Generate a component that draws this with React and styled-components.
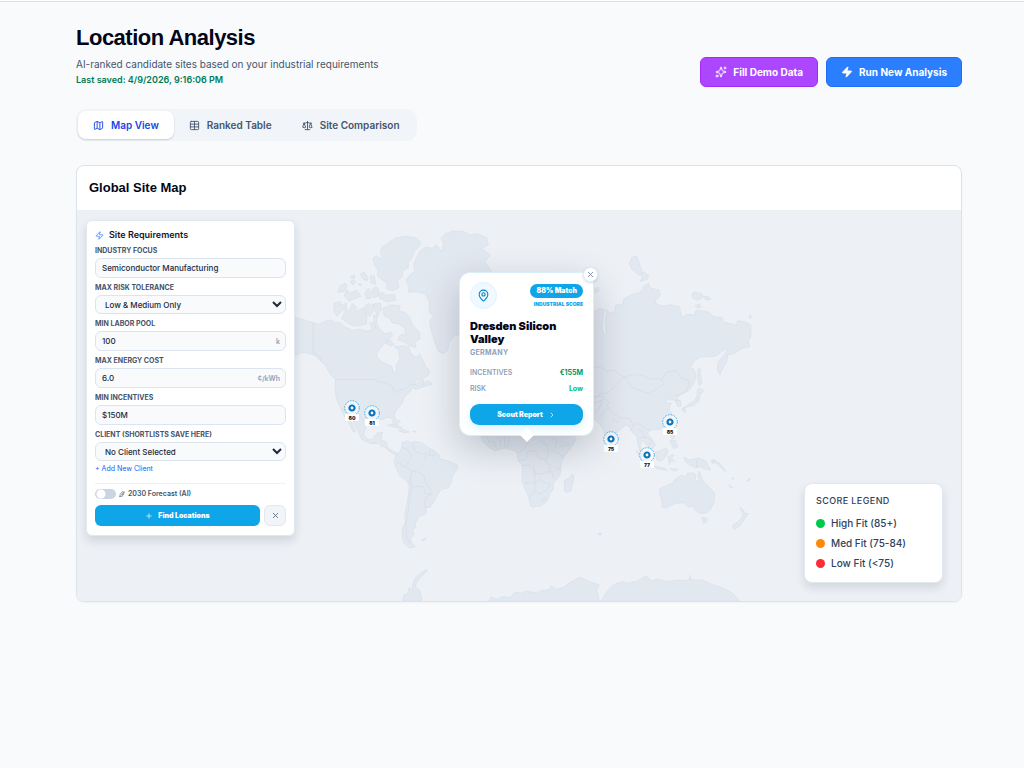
import React from "react";
import styled, { createGlobalStyle, css } from "styled-components";
import { Map, Table, Scale, Sparkles, Zap, MapPin, ChevronRight, Plus, X } from "lucide-react";

const Global = createGlobalStyle`
  *, *::before, *::after { box-sizing: border-box; }
  body { margin: 0; background: #f8fafc; color: #0f172b; font-family: Inter, "Liberation Sans", sans-serif; }
  button, input, select { font-family: inherit; }
  h1, h2, h3, p, dl, dd, ul { margin: 0; padding: 0; }
`;

const Page = styled.div`
  min-height: 100vh;
  border-top: 1px solid #fff;
  box-shadow: inset 0 1px 0 #dde2ea;
  padding: 24px 62px 24px 76px;
`;
const Header = styled.header`
  display: flex;
  justify-content: space-between;
  align-items: flex-end;
`;
const Title = styled.h1`
  font: 700 22px/26px "Liberation Sans", Arial, sans-serif;
  letter-spacing: -0.5px;
  color: #020618;
`;
const Subtitle = styled.p`
  margin-top: 5px;
  font-size: 10px;
  line-height: 16px;
  color: #45556c;
`;
const Saved = styled.p`
  font-size: 9px;
  line-height: 15px;
  font-weight: 600;
  color: #007a55;
`;
const Actions = styled.div`
  display: flex;
  gap: 8px;
`;
const ActionButton = styled.button`
  display: flex;
  align-items: center;
  gap: 6px;
  height: 30px;
  padding: 0 14px;
  border: 1px solid ${(p) => p.$edge};
  border-radius: 6px;
  background: ${(p) => p.$fill};
  color: #fff;
  font-size: 10px;
  font-weight: 700;
`;
const Tabs = styled.nav`
  display: inline-flex;
  margin-top: 22px;
  padding: 2px;
  border-radius: 10px;
  background: #f1f5f9;
`;
const Tab = styled.button`
  display: flex;
  align-items: center;
  gap: 7px;
  height: 28px;
  padding: 0 15px;
  border: 0;
  border-radius: 8px;
  background: transparent;
  color: #45556c;
  font-size: 10px;
  font-weight: 600;
  ${(p) => p.$active && css`
    background: #fff;
    color: #1447e6;
    box-shadow: 0 1px 2px rgba(15, 23, 42, 0.18);
  `}
`;
const Card = styled.section`
  margin-top: 24px;
  border: 1px solid #dbe3ec;
  border-radius: 8px;
  background: #fff;
  overflow: hidden;
  box-shadow: 0 1px 2px rgba(15, 23, 42, 0.04);
`;
const CardTitle = styled.h2`
  padding: 12px;
  font: 700 13px/20px "Liberation Sans", Arial, sans-serif;
  color: #020618;
`;
const MapArea = styled.div`
  position: relative;
  display: flex;
  justify-content: space-between;
  align-items: flex-start;
  min-height: 391px;
  padding: 10px 18px 18px 9px;
  background: #edf1f6;
`;
const WorldSvg = styled.svg`
  position: absolute;
  inset: 0;
  width: 100%;
  height: 100%;
`;
const Form = styled.form`
  position: relative;
  width: 209px;
  padding: 8px 8px 9px;
  border: 1px solid #e2e8f0;
  border-radius: 6px;
  background: #fff;
  box-shadow: 0 5px 10px rgba(15, 23, 42, 0.13);
`;
const FormTitle = styled.h3`
  display: flex;
  align-items: center;
  gap: 5px;
  font-size: 9px;
  line-height: 12px;
  font-weight: 600;
`;
const Field = styled.div`
  margin-top: 5px;
  display: grid;
  gap: 2px;
`;
const Label = styled.label`
  font-size: 7px;
  line-height: 10px;
  font-weight: 700;
  text-transform: uppercase;
  color: #45556c;
`;
const control = css`
  width: 100%;
  border: 1px solid #dbe4ef;
  border-radius: 6px;
  background: #f8fafc;
  color: #1d293d;
  font-size: 8px;
  font-weight: 500;
`;
const InputWrap = styled.div`
  display: grid;
  align-items: center;
  > * { grid-area: 1 / 1; }
`;
const Input = styled.input`
  ${control}
  height: 20px;
  padding: 0 6px;
`;
const Select = styled.select`
  ${control}
  height: 19px;
  padding: 0 5px;
`;
const Unit = styled.span`
  justify-self: end;
  margin-right: 6px;
  font-size: 7px;
  font-weight: 600;
  color: #90a1b9;
`;
const AddLink = styled.a`
  display: block;
  margin-top: 2px;
  font-size: 7px;
  line-height: 12px;
  color: #155dfc;
  text-decoration: none;
`;
const Forecast = styled.label`
  display: flex;
  align-items: center;
  gap: 3px;
  margin-top: 8px;
  padding-top: 4px;
  border-top: 1px solid #eef2f7;
  font-size: 7px;
  line-height: 12px;
  font-weight: 600;
  color: #45556c;
`;
const Toggle = styled.input`
  appearance: none;
  width: 21px;
  height: 10px;
  margin: 0;
  border-radius: 5px;
  background: radial-gradient(circle at 6px 5px, #fff 4px, transparent 5px) #cad5e2;
`;
const FormButtons = styled.div`
  display: flex;
  gap: 4px;
  margin-top: 5px;
`;
const FindButton = styled.button`
  flex: 1;
  display: flex;
  align-items: center;
  justify-content: center;
  gap: 5px;
  height: 21px;
  border: 0;
  border-radius: 6px;
  background: #0ea5e9;
  color: #fff;
  font-size: 7px;
  font-weight: 900;
`;
const ClearButton = styled.button`
  display: grid;
  place-items: center;
  width: 22px;
  height: 21px;
  padding: 0;
  border: 1px solid #e2e8f0;
  border-radius: 6px;
  background: #f1f5f9;
  color: #45556c;
`;
const Legend = styled.aside`
  position: relative;
  align-self: flex-end;
  width: 139px;
  padding: 10px 11px 9px;
  border: 1px solid #e2e8f0;
  border-radius: 8px;
  background: #fff;
  box-shadow: 0 5px 10px rgba(15, 23, 42, 0.12);
`;
const LegendTitle = styled.h3`
  font-size: 9px;
  line-height: 13px;
  font-weight: 500;
  letter-spacing: 0.4px;
  color: #314158;
  margin-bottom: 6px;
`;
const LegendItem = styled.li`
  display: flex;
  align-items: center;
  gap: 6px;
  font-size: 10px;
  font-weight: 500;
  line-height: 20px;
  color: #314158;
  list-style: none;
  &::before {
    content: "";
    width: 9px;
    height: 9px;
    border-radius: 50%;
    background: ${(p) => p.$color};
  }
`;
const Popup = styled.article`
  position: absolute;
  top: 62px;
  left: calc(50% - 60px);
  width: 135px;
  padding: 9px 10px 10px;
  border: 1px solid #d9eefb;
  border-radius: 11px;
  background: #fff;
  box-shadow: 0 12px 36px rgba(15, 23, 42, 0.22);
  &::after {
    content: "";
    position: absolute;
    bottom: -5px;
    left: 50%;
    width: 10px;
    height: 10px;
    background: #fff;
    transform: translateX(-50%) rotate(45deg);
  }
`;
const CloseButton = styled.button`
  position: absolute;
  top: -6px;
  right: -5px;
  display: grid;
  place-items: center;
  width: 15px;
  height: 15px;
  padding: 0;
  border: 1px solid #d9eefb;
  border-radius: 50%;
  background: #fff;
  color: #62748e;
  box-shadow: 0 1px 3px rgba(15, 23, 42, 0.15);
`;
const PopupTop = styled.div`
  display: flex;
  justify-content: space-between;
  align-items: flex-start;
`;
const PinBadge = styled.span`
  display: grid;
  place-items: center;
  width: 27px;
  height: 27px;
  border: 1px solid #e0f2fe;
  border-radius: 50%;
  background: #f0f9ff;
  color: #0284c7;
`;
const Score = styled.div`
  display: grid;
  justify-items: end;
  gap: 2px;
  padding-top: 2px;
`;
const Match = styled.strong`
  padding: 0 6px;
  border-radius: 7px;
  background: #0ea5e9;
  color: #fff;
  font-size: 7px;
  line-height: 14px;
  font-weight: 900;
`;
const ScoreKind = styled.span`
  font-size: 5px;
  line-height: 8px;
  font-weight: 900;
  color: #0ea5e9;
`;
const PopupTitle = styled.h3`
  margin-top: 11px;
  font-size: 11px;
  line-height: 13px;
  font-weight: 900;
  color: #020618;
`;
const Country = styled.p`
  font-size: 7px;
  line-height: 13px;
  font-weight: 700;
  letter-spacing: 0.3px;
  color: #90a1b9;
`;
const Facts = styled.dl`
  margin-top: 6px;
`;
const Fact = styled.div`
  display: flex;
  justify-content: space-between;
  font-size: 7px;
  line-height: 16px;
  font-weight: 600;
  color: #90a1b9;
  dd { color: ${(p) => p.$color}; font-weight: 700; }
`;
const ReportButton = styled.button`
  display: flex;
  align-items: center;
  justify-content: center;
  gap: 5px;
  width: 100%;
  height: 21px;
  margin-top: 7px;
  border: 0;
  border-radius: 9px;
  background: #0ea5e9;
  color: #fff;
  font-size: 7px;
  font-weight: 900;
  box-shadow: 0 4px 8px rgba(14, 165, 233, 0.14);
`;

const regions = [
  {
    at: [295, 225],
    land: [
      // Alaska, Canada, United States, Mexico and Central America
      "M-30 290L0 278 20 282 54 293 72 298 86 290 108 285 122 294 132 290 150 306 172 316 192 312 212 318 232 314 240 308 238 290 236 270 246 272 246 300 260 320 270 326 290 322 292 334 280 345 262 362 246 385 247 398 264 412 290 424 296 444 304 444 304 420 315 402 312 384 310 366 324 362 340 366 350 388 366 398 374 386 384 408 392 425 404 436 400 452 382 460 366 466 350 478 364 476 382 462 388 470 382 480 400 466 413 478 400 480 384 486 362 494 354 486 344 502 328 515 320 538 304 554 298 572 308 590 306 604 298 602 290 580 276 576 262 584 242 578 222 590 212 606 206 630 220 645 234 642 246 624 262 622 258 646 274 650 278 670 300 682 318 690 306 690 290 684 270 668 250 656 226 656 200 642 190 620 174 590 164 580 182 620 176 622 162 595 150 578 138 552 124 522 120 490 122 464 106 448 92 422 78 408 60 392 40 384 20 382 0 392 -30 400Z",
      "M238 120L234 100 246 92 252 102 262 96 256 80 262 66 280 54 300 40 330 34 362 38 378 52 370 66 356 82 350 100 340 112 340 128 324 136 322 154 308 168 312 188 292 198 274 190 278 176 258 162 246 150 250 136Z",
      "M376 78L392 66 412 70 426 60 440 80 446 54 438 42 450 26 476 18 506 20 526 30 548 26 575 38 580 60 560 70 585 90 570 110 590 140 560 190 545 240 530 290 500 322 478 334 462 352 458 376 444 386 430 378 420 352 410 320 404 290 414 274 402 260 404 234 392 208 366 200 340 202 342 186 332 164 346 150 360 138 356 118 366 96Z",
      "M118 234L136 230 138 242 154 234 154 254 142 256 126 274 116 258Z",
      "M140 280L150 258 166 254 172 236 184 246 182 260 206 248 216 276 214 296 196 302 172 302 156 292Z",
      "M210 242L222 236 228 244 236 236 236 258 224 274 214 266Z",
      "M238 236L256 234 260 252 248 274 240 256Z",
      "M264 250L286 240 316 242 312 258 330 262 344 278 352 300 374 322 376 342 360 350 364 368 342 362 326 350 308 344 316 330 332 326 330 310 308 296 292 294 282 278 268 274Z",
      "M250 206L262 202 272 210 300 208 302 226 278 230 256 222Z",
      "M232 194L242 184 252 196 248 214 236 218Z",
      "M210 204L220 190 230 202 228 220 214 220Z",
      "M148 212L154 194 166 204 186 196 198 214 184 220 162 228Z",
      "M128 202L136 182 152 174 156 184 146 200Z",
      "M196 146L208 142 220 158 216 168 202 160Z",
      "M226 152L238 154 242 178 228 174Z",
      "M168 152l12 0-2 8-9 0ZM166 170l10-6 6 6-8 10ZM190 176l10 2-4 6Z",
      "M224 294l14-2 4 16-12 2ZM276 344l12 4 10 10-10 6-14-8ZM298 364l14 2-8 6Z",
    ],
    borders: [
      "M54 293L54 382 70 390 80 408",
      "M122 464L240 464 246 468 272 474 292 484 298 504 316 494 334 490 346 480 362 476 368 486",
      "M138 552L160 560 188 564 206 586",
      "M232 656L246 650M254 668L264 660",
    ],
  },
  {
    at: [380, 400],
    land: [
      "M66 128L84 122 92 130 104 124 126 128 140 140 164 152 178 164 180 176 208 184 232 194 234 204 218 226 214 246 204 264 184 268 172 284 164 302 150 322 136 322 140 336 132 344 114 350 112 362 104 368 108 382 98 390 102 404 92 414 94 428 106 440 90 444 74 432 66 412 68 384 76 368 74 344 80 318 84 290 88 258 78 240 60 228 50 208 42 188 46 168 58 158 66 142Z",
      "M126 418L138 415 134 420 128 422Z",
      "M22 76L38 72 58 78 70 88 52 84 36 80Z",
      "M56 92L74 90 88 96 72 98ZM98 94l10 0-2 3Z",
      "M54 58l5 4-2 8M60 68l3 2",
      "M300 70L590 70 582 96 586 122 572 146 552 170 544 190 542 208 540 226 520 250 520 268 510 280 502 302 486 316 458 322 450 316 448 296 436 268 426 244 428 214 426 194 414 182 412 160 404 152 376 144 344 152 324 140 308 124 302 106Z",
      "M578 222L582 232 574 270 562 278 552 272 554 240 568 234Z",
      "M68 603L72 585 82 582 88 562 96 574 98 556 106 534 124 518 140 508 142 512 124 530 110 546 106 560 120 572 126 603Z",
      "M326 603L334 590 350 598 366 590 390 592 406 576 424 580 440 574 470 578 484 572 506 570 514 558 530 568 550 562 566 550 584 540 600 532 632 546 658 555 650 570 658 603Z",
      "M664 603L680 575 705 552 732 544 738 550 770 544 798 528 815 542 834 538 860 545 892 540 926 542 930 526 936 540 968 540 994 552 1010 558 1034 566 1058 580 1078 603Z",
    ],
    borders: [
      "M66 142L82 148 96 168 86 186 76 200 96 212 92 232 88 250",
      "M98 130L104 152 120 162 138 160 136 178M150 148L146 166 164 168M160 152L166 168",
      "M96 212L114 216 132 228 138 250 150 266 154 284 138 290 132 300 136 322",
      "M92 232L96 262 88 300 84 340 78 372 80 412 90 430",
      "M50 188L62 190 66 200 76 200M96 262L114 258 132 262 134 280 154 284",
      "M304 108L322 112 328 128 344 124 350 150M350 110L360 118 362 140M372 100L376 144M388 98L384 142",
      "M412 160L430 150 448 120 444 98M414 182L438 180 442 156 468 152 476 176 500 178 506 158 498 132 476 120",
      "M426 196L446 196 462 206 466 220 488 222 508 212 510 196 498 188 500 178M462 206L466 248 446 250 436 248",
      "M466 248L462 268 478 282 500 270 510 254 492 246 482 238 466 248M448 296L458 278 466 276M484 298l10-8 4 6-10 8Z",
      "M510 150L530 158 552 170M524 150L530 120 512 112M500 220L516 214 522 236M540 140L570 134M530 206L542 208",
    ],
  },
  {
    at: [580, 240],
    land: [
      "M20 230L56 206 72 208 68 240 66 262 72 286 80 280 76 246 80 220 78 208 88 218 106 215 106 196 130 192 130 178 150 166 176 158 190 150 190 140 206 130 210 144 236 150 242 164 228 180 226 190 248 198 270 194 298 200 304 226 314 232 318 222 344 226 348 210 386 216 402 230 426 232 430 246 470 256 472 242 498 246 513 256 513 290 504 302 510 320 484 326 464 340 444 344 440 366 428 384 420 404 412 390 414 366 430 348 446 322 426 334 412 346 396 350 362 350 344 362 330 382 342 388 348 406 342 430 326 452 302 464 290 474 302 484 304 498 294 500 284 480 270 480 262 474 258 488 274 490 266 506 276 522 274 544 260 558 240 568 210 570 202 582 218 600 226 616 214 630 200 614 188 602 180 616 190 642 204 670 212 684 198 674 184 652 176 620 170 588 160 580 146 558 136 556 112 576 104 604 92 620 80 596 68 564 54 546 30 530Z",
      "M148 72L156 52 170 48 178 70 186 94 182 108 168 98 156 88Z",
      "M186 98L194 96 206 108 202 118 180 124 188 110Z",
      "M336 160L346 156 366 162 368 174 352 180 338 174Z",
      "M370 168L386 170 392 178 378 180ZM346 198l10-6 8 8-10 5ZM506 232l7-7v10ZM44 146l10-4 3 10-12 8Z",
      "M354 390L360 384 362 410 366 428 358 438 352 412Z",
      "M352 450L360 444 372 452 360 464 356 484 342 496 324 500 308 506 330 490 344 482 352 466Z",
      "M306 506l10 0 0 12-8-4Z",
      "M272 586L280 578 284 592 278 598ZM270 600L286 602 294 620 282 626 274 614Z",
      "M226 636L240 632 258 624 264 634 256 652 244 664 230 660Z",
      "M264 650L282 644 274 656 284 664 272 662 268 674Z",
      "M220 678L250 684 262 690 236 688Z",
      "M168 630L180 644 200 664 208 680 192 670 178 650Z",
      "M312 652L328 660 356 654 378 664 392 690 376 688 360 680 346 684 330 676 316 664Z",
      "M392 664L408 660 400 672ZM394 658l26 12 18 24-8-4-14-14Z",
      "M270 686l24 2-10 6ZM456 712l6 4-4 3ZM446 734l12 8-4 2ZM500 722l12-8-6 10ZM54 880l8-1 2 5-7 2Z",
      "M240 746L262 736 276 730 290 714 304 706 318 710 322 700 340 698 348 706 346 720 360 726 354 706 358 694 368 720 384 738 404 760 402 788 390 810 376 820 360 820 350 814 336 798 326 802 310 788 286 790 258 804 246 800 246 784 238 760Z",
      "M366 832L382 836 378 848 370 850Z",
      "M480 802L492 812 494 820 506 820 494 836 480 858 462 868 456 858 476 844 490 826Z",
    ],
    borders: [
      "M40 384L62 380 80 394 100 390 132 412 156 404 186 406 206 416 246 418 260 396 290 392 300 412 328 424 322 448 300 464",
      "M132 412L160 444 200 460 232 448 252 430 246 418",
      "M132 412L110 434 84 458 60 462 40 478",
      "M40 470L66 468 88 486 80 500 96 520 120 532 150 536 160 556 174 548 196 566 210 570",
      "M40 490L60 484 70 478 56 508 40 526M60 532L76 510 88 500",
      "M120 532L112 548 96 536M160 556L150 574M174 568L188 574 196 594M178 594L200 592 214 602 206 616",
      "M282 466L300 464M284 482L302 482M350 660L350 684",
    ],
  },
];

const sites = [
  { x: 352, y: 408, score: 80 },
  { x: 372, y: 413, score: 81 },
  { x: 670, y: 422, score: 85 },
  { x: 611, y: 439, score: 75 },
  { x: 647, y: 455, score: 77 },
];

const WorldMap = () => (
  <WorldSvg viewBox="77 210 884 391" preserveAspectRatio="xMidYMid slice" aria-label="World map of candidate sites">
    {regions.map((r) => (
      <g key={r.at[0]} transform={`translate(${r.at[0]} ${r.at[1]}) scale(0.3333)`} strokeWidth="1.8" strokeLinejoin="round">
        {r.land.map((d) => <path key={d} d={d} fill="#e2e8f0" stroke="#d5dde7" />)}
        {r.borders.map((d) => <path key={d} d={d} fill="none" stroke="#d1dae5" />)}
      </g>
    ))}
    {sites.map((s) => (
      <g key={s.score} transform={`translate(${s.x} ${s.y})`}>
        <circle r="7.3" fill="#fff" fillOpacity="0.55" stroke="#38b6f1" strokeWidth="1" strokeDasharray="1.7 1.2" />
        <circle r="2.5" fill="#fff" stroke="#0873bf" strokeWidth="2.2" />
        <rect x="-7" y="6" width="14" height="7" rx="1" fill="#fff" />
        <text y="12" textAnchor="middle" fontFamily="Inter, sans-serif" fontSize="5" fontWeight="900" fill="#0f172b">{s.score}</text>
      </g>
    ))}
  </WorldSvg>
);

const ForecastIcon = () => (
  <svg width="6" height="6" viewBox="0 0 14 14" fill="none" stroke="#45556c" strokeWidth="1.3" strokeLinecap="round">
    <path d="M1 10L7 2h6L8 9M3 12L10 4M1 13h6l4-6" />
  </svg>
);

function TextField({ id, label, value, unit }) {
  return (
    <Field>
      <Label htmlFor={id}>{label}</Label>
      <InputWrap>
        <Input id={id} defaultValue={value} />
        {unit && <Unit>{unit}</Unit>}
      </InputWrap>
    </Field>
  );
}

function SelectField({ id, label, value }) {
  return (
    <Field>
      <Label htmlFor={id}>{label}</Label>
      <Select id={id}><option>{value}</option></Select>
    </Field>
  );
}

export default function App() {
  return (
    <Page>
      <Global />
      <Header>
        <div>
          <Title>Location Analysis</Title>
          <Subtitle>AI-ranked candidate sites based on your industrial requirements</Subtitle>
          <Saved>Last saved: 4/9/2026, 9:16:06 PM</Saved>
        </div>
        <Actions>
          <ActionButton $fill="#ad46ff" $edge="#a12bf7"><Sparkles size={12} />Fill Demo Data</ActionButton>
          <ActionButton $fill="#2b7fff" $edge="#1c6dfb"><Zap size={12} fill="currentColor" />Run New Analysis</ActionButton>
        </Actions>
      </Header>
      <Tabs>
        <Tab $active><Map size={11} />Map View</Tab>
        <Tab><Table size={11} />Ranked Table</Tab>
        <Tab><Scale size={11} />Site Comparison</Tab>
      </Tabs>
      <Card>
        <CardTitle>Global Site Map</CardTitle>
        <MapArea>
          <WorldMap />
          <Form onSubmit={(e) => e.preventDefault()}>
            <FormTitle><Zap size={9} color="#2b7fff" />Site Requirements</FormTitle>
            <TextField id="industry" label="Industry Focus" value="Semiconductor Manufacturing" />
            <SelectField id="risk" label="Max Risk Tolerance" value="Low & Medium Only" />
            <TextField id="labor" label="Min Labor Pool" value="100" unit="k" />
            <TextField id="energy" label="Max Energy Cost" value="6.0" unit="¢/kWh" />
            <TextField id="incentives" label="Min Incentives" value="$150M" />
            <SelectField id="client" label="Client (Shortlists save here)" value="No Client Selected" />
            <AddLink href="#client">+ Add New Client</AddLink>
            <Forecast><Toggle type="checkbox" /><ForecastIcon />2030 Forecast (AI)</Forecast>
            <FormButtons>
              <FindButton><Plus size={8} />Find Locations</FindButton>
              <ClearButton type="button" aria-label="Clear"><X size={9} /></ClearButton>
            </FormButtons>
          </Form>
          <Legend>
            <LegendTitle>SCORE LEGEND</LegendTitle>
            <ul>
              <LegendItem $color="#00c950">High Fit (85+)</LegendItem>
              <LegendItem $color="#ff8904">Med Fit (75-84)</LegendItem>
              <LegendItem $color="#fb2c36">Low Fit (&lt;75)</LegendItem>
            </ul>
          </Legend>
          <Popup>
            <CloseButton aria-label="Close"><X size={9} /></CloseButton>
            <PopupTop>
              <PinBadge><MapPin size={13} /></PinBadge>
              <Score>
                <Match>88% Match</Match>
                <ScoreKind>INDUSTRIAL SCORE</ScoreKind>
              </Score>
            </PopupTop>
            <PopupTitle>Dresden Silicon Valley</PopupTitle>
            <Country>GERMANY</Country>
            <Facts>
              <Fact $color="#009966"><dt>INCENTIVES</dt><dd>€155M</dd></Fact>
              <Fact $color="#00bc7d"><dt>RISK</dt><dd>Low</dd></Fact>
            </Facts>
            <ReportButton>Scout Report<ChevronRight size={8} /></ReportButton>
          </Popup>
        </MapArea>
      </Card>
    </Page>
  );
}
